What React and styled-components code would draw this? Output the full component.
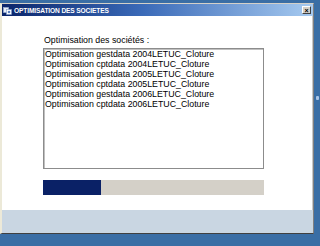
import React from "react";
import styled, { createGlobalStyle } from "styled-components";

const Global = createGlobalStyle`
  html, body { margin: 0; padding: 0; }
  body {
    background: #3a6ea5;
    width: 320px;
    height: 246px;
    overflow: hidden;
    font-family: "Liberation Sans", Arial, sans-serif;
  }
`;

const Desktop = styled.div`
  position: relative;
  width: 320px;
  height: 246px;
  padding-top: 3px;
  box-sizing: border-box;
`;

const Window = styled.div`
  width: 314px;
  box-sizing: border-box;
  display: flex;
  flex-direction: column;
  background: #ffffff;
  border-left: 2px solid #ece9d8;
  border-top: 1px solid #d4d0c8;
  border-right: 1px solid #808080;
  border-bottom: 1px solid #404040;
  box-shadow: inset -1px 0 0 #c8c8c8;
`;

const TitleBar = styled.div`
  height: 12px;
  display: flex;
  align-items: center;
  padding: 0 2px 0 1px;
  background: linear-gradient(to right, #0a246a 0%, #3a6ab8 45%, #a6caf0 100%);
`;

const TitleIcon = styled.svg`
  width: 9px;
  height: 9px;
  flex: none;
  margin-right: 2px;
`;

const TitleText = styled.span`
  color: #ffffff;
  font-weight: bold;
  font-size: 6.6px;
  letter-spacing: -0.12px;
  white-space: nowrap;
  flex: 1;
`;

const CloseButton = styled.div`
  width: 9px;
  height: 8px;
  background: #d4d0c8;
  border: 1px solid;
  border-color: #ffffff #404040 #404040 #ffffff;
  box-sizing: border-box;
  display: flex;
  align-items: center;
  justify-content: center;
  color: #000;
  font-size: 7px;
  font-weight: bold;
  line-height: 1;
`;

const Body = styled.div`
  height: 194px;
  box-sizing: border-box;
  padding: 19px 0 0 41px;
  display: flex;
  flex-direction: column;
`;

const Label = styled.div`
  font-size: 8.8px;
  line-height: 10px;
  color: #000;
  height: 13px;
  padding-left: 1px;
`;

const ListBox = styled.div`
  width: 221px;
  height: 121px;
  box-sizing: border-box;
  border: 1px solid #8c8c8c;
  box-shadow: inset 1px 1px 0 #c0c0c0;
  padding: 0 0 0 1px;
  display: flex;
  flex-direction: column;
`;

const Item = styled.div`
  font-size: 8.8px;
  line-height: 10px;
  color: #000;
  white-space: nowrap;
`;

const Progress = styled.div`
  margin-top: 11px;
  width: 221px;
  height: 15px;
  background: #d4d0c8;
  display: flex;
`;

const ProgressFill = styled.div`
  height: 100%;
  background: #0a2166;
`;

const Footer = styled.div`
  height: 23px;
  background: #c9d6e2;
`;

const DesktopSpot = styled.div`
  position: absolute;
  left: 316px;
  top: 96px;
  width: 3px;
  height: 4px;
  border-radius: 1px;
  background: #a9c4e6;
`;

const items = [
  "Optimisation gestdata 2004LETUC_Cloture",
  "Optimisation cptdata 2004LETUC_Cloture",
  "Optimisation gestdata 2005LETUC_Cloture",
  "Optimisation cptdata 2005LETUC_Cloture",
  "Optimisation gestdata 2006LETUC_Cloture",
  "Optimisation cptdata 2006LETUC_Cloture",
];

export default function App() {
  const progress = 58;
  return (
    <>
      <Global />
      <Desktop>
        <Window>
          <TitleBar>
            <TitleIcon viewBox="0 0 9 9">
              <rect x="0.5" y="1.5" width="5" height="5" fill="#e8eef8" stroke="#9fb4d8" strokeWidth="0.6" />
              <rect x="3.5" y="3.5" width="5" height="5" fill="#ffffff" stroke="#7f9cc8" strokeWidth="0.6" />
              <circle cx="6" cy="6" r="1.3" fill="#5a7fc0" />
            </TitleIcon>
            <TitleText>OPTIMISATION DES SOCIETES</TitleText>
            <CloseButton>×</CloseButton>
          </TitleBar>
          <Body>
            <Label>Optimisation des sociétés :</Label>
            <ListBox>
              {items.map((t) => (
                <Item key={t}>{t}</Item>
              ))}
            </ListBox>
            <Progress>
              <ProgressFill style={{ width: `${progress}px` }} />
            </Progress>
          </Body>
          <Footer />
        </Window>
        <DesktopSpot />
      </Desktop>
    </>
  );
}
